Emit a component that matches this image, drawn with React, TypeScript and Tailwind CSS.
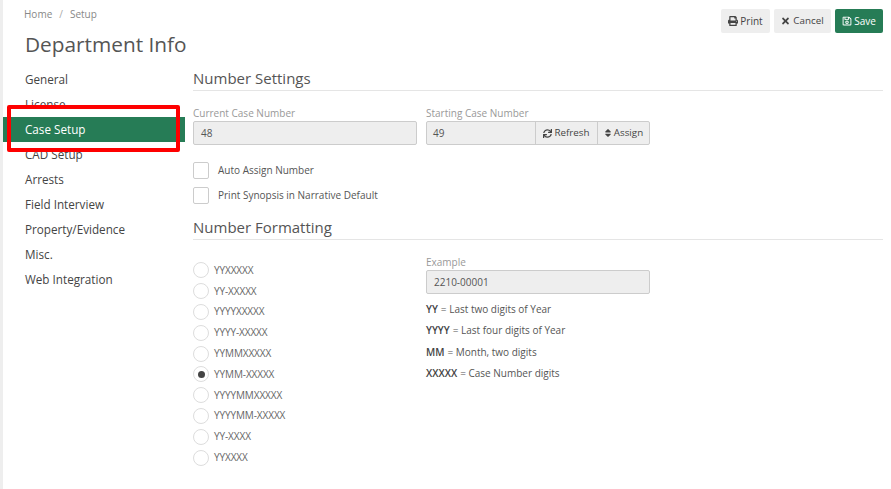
import { FaPrint, FaTimes, FaRegSave, FaSync, FaSort } from "react-icons/fa";

const navItems = [
  "General",
  "License",
  "Case Setup",
  "CAD Setup",
  "Arrests",
  "Field Interview",
  "Property/Evidence",
  "Misc.",
  "Web Integration",
];

const formats = [
  "YYXXXXX",
  "YY-XXXXX",
  "YYYYXXXXX",
  "YYYY-XXXXX",
  "YYMMXXXXX",
  "YYMM-XXXXX",
  "YYYYMMXXXXX",
  "YYYYMM-XXXXX",
  "YY-XXXX",
  "YYXXXX",
];

const legend = [
  { key: "YY", text: "Last two digits of Year" },
  { key: "YYYY", text: "Last four digits of Year" },
  { key: "MM", text: "Month, two digits" },
  { key: "XXXXX", text: "Case Number digits" },
];

function SectionTitle({ title }: { title: string }) {
  return (
    <h2 className="h-[24px] border-b border-[#e5e5e5] pt-[1px] text-[15px] leading-[20px] text-[#555]">
      {title}
    </h2>
  );
}

function Field({ label, value }: { label: string; value: string }) {
  return (
    <div className="w-[224px]">
      <label className="block h-[16px] pt-[1px] text-[10px] leading-[14px] text-[#999]">{label}</label>
      <div className="flex h-[24px] items-center rounded-[2px] border border-[#ccc] bg-[#eee] px-[7px] text-[10px] text-[#555]">
        {value}
      </div>
    </div>
  );
}

function Check({ label }: { label: string }) {
  return (
    <div className="flex h-[25px] items-center gap-[9px]">
      <span className="h-[17px] w-[16px] rounded-[2px] border border-[#ccc] bg-white" />
      <span className="text-[10px] text-[#555]">{label}</span>
    </div>
  );
}

export default function App() {
  return (
    <div className="flex h-[489px] w-[891px] overflow-hidden bg-white font-['Open_Sans',sans-serif] text-[#555]">
      <div className="w-[3px] shrink-0 bg-[#eee]" />

      <div className="relative w-[888px]">
        <header className="flex h-[67px] justify-between pr-[8px]">
          <div className="pl-[22px]">
            <div className="-ml-[1px] flex h-[23px] items-end gap-[7px] pb-[1px] text-[10px] text-[#888]">
              <span>Home</span>
              <span className="text-[#aaa]">/</span>
              <span>Setup</span>
            </div>
            <h1 className="mt-[6px] text-[20.8px] leading-[30px] text-[#555]">Department Info</h1>
          </div>

          <div className="mt-[9px] flex h-[24px] gap-[4px]">
            <button className="flex w-[49px] items-center justify-center gap-[2px] rounded-[2px] bg-[#eee] text-[10px] text-[#444]">
              <FaPrint className="h-[10px] w-[10px]" />
              Print
            </button>
            <button className="flex w-[57px] items-center justify-center gap-[3px] rounded-[2px] bg-[#eee] text-[9.8px] text-[#444]">
              <FaTimes className="h-[10px] w-[9px]" />
              Cancel
            </button>
            <button className="flex w-[48px] items-center justify-center gap-[2px] rounded-[2px] bg-[#267c56] text-[10px] text-white">
              <FaRegSave className="h-[10px] w-[10px]" />
              Save
            </button>
          </div>
        </header>

        <div className="flex">
          <nav className="w-[182px] shrink-0">
            {navItems.map((item) => (
              <div
                key={item}
                className={
                  item === "Case Setup"
                    ? "flex h-[25px] items-center bg-[#267c56] pl-[22px] text-[11.7px] text-white"
                    : "flex h-[25px] items-center pl-[22px] text-[11.7px] text-[#444]"
                }
              >
                {item}
              </div>
            ))}
          </nav>

          <main className="ml-[8px] w-[690px]">
            <SectionTitle title="Number Settings" />

            <div className="mt-[14px] flex gap-[9px]">
              <Field label="Current Case Number" value="48" />
              <div className="w-[224px]">
                <label className="block h-[16px] pt-[1px] text-[10px] leading-[14px] text-[#999]">
                  Starting Case Number
                </label>
                <div className="flex h-[24px] rounded-[2px] border border-[#ccc] bg-[#eee] text-[10px] text-[#555]">
                  <span className="flex w-[108px] items-center px-[6px]">49</span>
                  <span className="flex w-[62px] items-center justify-center gap-[2px] border-l border-[#ccc] text-[9.8px] text-[#444]">
                    <FaSync className="h-[9px] w-[9px]" />
                    Refresh
                  </span>
                  <span className="flex flex-1 items-center justify-center gap-[2px] border-l border-[#ccc] text-[9.8px] text-[#444]">
                    <FaSort className="h-[10px] w-[8px]" />
                    Assign
                  </span>
                </div>
              </div>
            </div>

            <div className="mt-[13px]">
              <Check label="Auto Assign Number" />
              <Check label="Print Synopsis in Narrative Default" />
            </div>

            <div className="mt-[8px]">
              <SectionTitle title="Number Formatting" />
            </div>

            <div className="flex">
              <div className="w-[233px] pt-[20px]">
                {formats.map((format) => (
                  <div key={format} className="flex h-[20.8px] items-center gap-[5px]">
                    <span className="flex h-[16px] w-[16px] items-center justify-center rounded-full border border-[#ddd] bg-white">
                      {format === "YYMM-XXXXX" && (
                        <span className="h-[7px] w-[7px] rounded-full bg-[#444]" />
                      )}
                    </span>
                    <span className="text-[10px] tracking-[-0.1px] text-[#666]">{format}</span>
                  </div>
                ))}
              </div>

              <div className="w-[224px] pt-[14px]">
                <Field label="Example" value="2210-00001" />
                <div className="mt-[5px]">
                  {legend.map((row) => (
                    <p key={row.key} className="flex h-[21.3px] items-center text-[10px] text-[#555]">
                      <b className="mr-[3px] font-semibold text-[#444]">{row.key}</b> = {row.text}
                    </p>
                  ))}
                </div>
              </div>
            </div>
          </main>
        </div>

        <div className="pointer-events-none absolute left-[4px] top-[105px] h-[47px] w-[173px] rounded-[2px] border-[4px] border-[#fe0000]" />
      </div>
    </div>
  );
}
